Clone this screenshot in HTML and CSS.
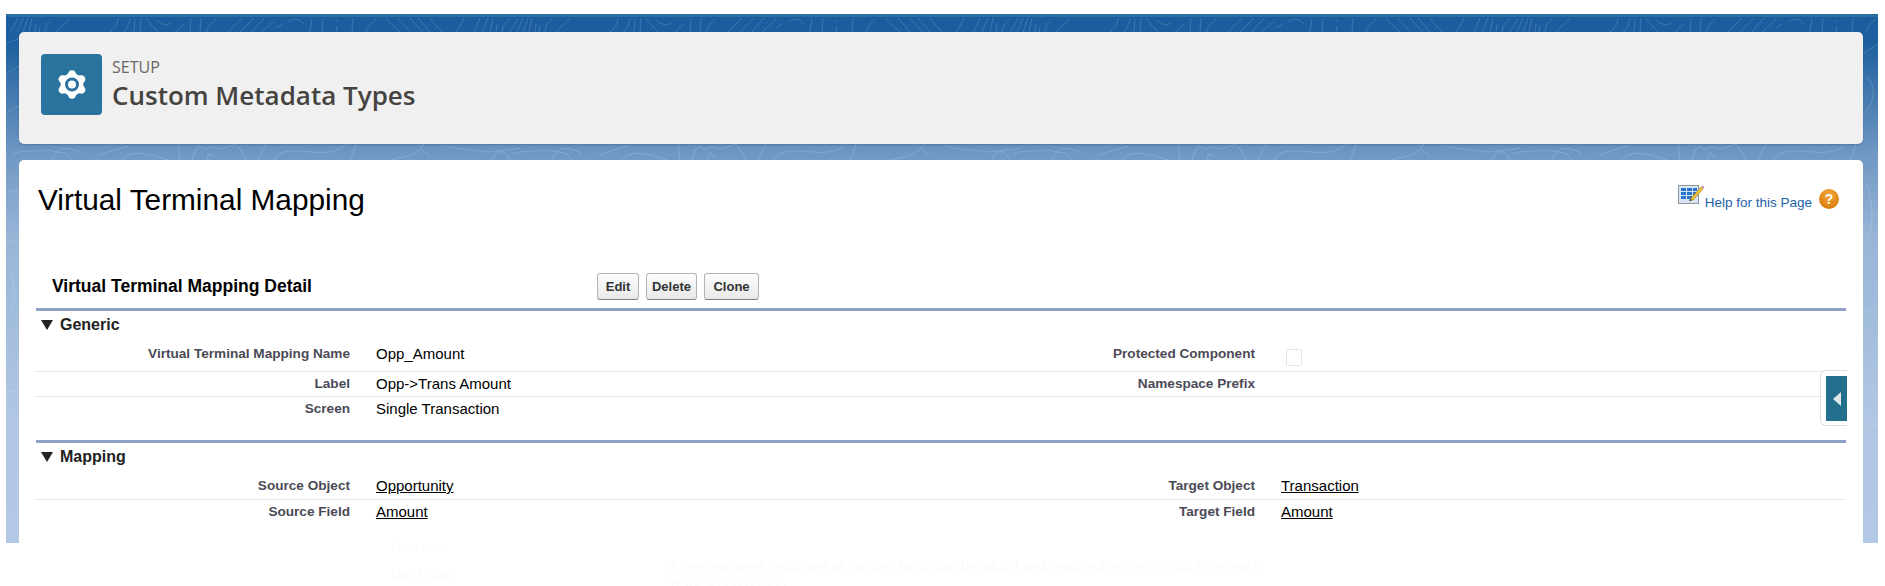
FILE: index.html
```html
<!DOCTYPE html>
<html lang="en">
<head>
<meta charset="utf-8">
<title>Virtual Terminal Mapping</title>
<link rel="stylesheet" href="styles.css">
</head>
<body>
<div class="stage">
  <svg class="contours" width="1872" height="529" viewBox="0 0 1872 529" fill="none">
    <defs>
      <g id="tile">
        <path d="M4 18C8 12 10 8 12 4M11 18L17 4M17 18L22 4M23 18L26 4M29 18L30 10M33 18L34 12M39 18C39 12 42 8 46 5M50 18C56 12 60 8 64 5M104 18C110 14 112 8 112 4M118 18C122 12 124 8 124 4M128 18L129 4M134 18L135 4M140 4C144 10 148 14 152 18M150 6C158 12 162 12 166 8M170 18C172 14 176 12 178 10M184 18L185 4M194 18L195 4M200 18C202 12 206 8 210 5M222 18L236 4M234 18L248 4M246 18L258 4M256 18L270 5M270 14L276 10M282 8C288 4 292 4 298 10M304 18L306 5M316 18L317 4M330 18L331 12M331 8L331 6M346 18L347 4M360 18C362 12 366 8 370 5M380 4C384 10 390 14 394 18M392 4L404 18M404 4L416 18M412 4L424 18M424 4C428 10 432 14 436 18M450 18C454 12 456 8 458 4M468 18L474 4M476 18L482 4M484 18L487 4M490 18L491 10M496 18C496 12 500 8 504 5"/>
        <path d="M6 140C14 136 30 138 42 136C56 140 60 136 66 146M46 146C50 134 60 130 76 140M92 142C100 138 110 136 122 132M116 146C124 136 136 138 162 146M172 130L174 146M186 146C190 134 192 130 196 134C200 138 204 130 210 134C216 136 222 132 230 130M202 146C200 140 206 136 208 144M230 130C236 138 238 142 240 146M252 146C254 140 256 136 260 130M268 146C272 136 288 136 306 138C322 140 336 136 340 130M350 130C348 136 346 142 344 146M384 146C400 142 412 142 418 130M416 136L424 142M440 132C452 136 470 136 484 138C496 136 506 136 514 134M486 146C490 136 498 134 504 146"/>
      </g>
    </defs>
    <use href="#tile" x="0"/>
    <use href="#tile" x="500"/>
    <use href="#tile" x="1000"/>
    <use href="#tile" x="1500"/>
    <path d="M0 30C5 28 10 26 13 24M0 60C5 56 9 55 13 52M0 100C5 96 9 94 13 92M0 180C6 176 10 176 13 178M0 230C6 226 10 226 13 230M4 260C10 270 10 290 4 300M0 380C6 376 10 376 13 380M1857 100C1870 90 1870 70 1860 62M1857 40L1872 30M1860 170C1868 190 1868 210 1860 230M1857 300L1872 290M1857 420C1866 410 1870 410 1872 412"/>
  </svg>

  <header class="page-head">
    <span class="head-icon">
      <svg width="32" height="32" viewBox="0 0 32 32">
        <path class="gear-body" d="M13 2.500C14.600 .8 17.400 .8 19 2.500C20 4.300 20 5.200 21.500 6C23 6.800 24 6.300 26 6.300C28.500 6.800 29.900 9.200 29.200 11.600C28.200 13.300 27.200 13.800 27.200 15.500C27.200 17.200 28.200 17.700 29.200 19.400C29.900 21.800 28.500 24.200 26 24.700C24 24.700 23 24.200 21.500 25C20 25.800 20 26.700 19 28.500C17.400 30.200 14.600 30.200 13 28.500C12 26.700 12 25.800 10.500 25C9 24.200 8 24.700 6 24.700C3.500 24.200 2.100 21.800 2.800 19.400C3.800 17.700 4.800 17.200 4.800 15.500C4.800 13.800 3.800 13.300 2.800 11.600C2.100 9.200 3.500 6.800 6 6.300C8 6.300 9 6.800 10.500 6C12 5.200 12 4.300 13 2.500Z"/>
        <circle class="gear-ring" cx="16" cy="15.500" r="5.500"/>
      </svg>
    </span>
    <div class="head-text">
      <span class="head-kicker">SETUP</span>
      <h1 class="head-title">Custom Metadata Types</h1>
    </div>
  </header>

  <main class="card">
    <div class="title-row">
      <h2 class="page-title">Virtual Terminal Mapping</h2>
      <div class="help">
        <svg class="help-table" width="27" height="21" viewBox="0 0 27 21">
          <rect x="0.500" y="1.500" width="20" height="18" fill="#d8e4f2" stroke="#8c979f"/>
          <path fill="#2a74cf" d="M3 4h5v3H3zM9 4h5v3H9zM15 4h4v3h-4zM3 8h5v3H3zM9 8h5v3H9zM3 12h5v3H3zM9 12h5v3H9zM15 8h4v3h-4z"/>
          <path fill="#f3c22f" stroke="#7a5c16" stroke-width=".5" d="M23 3l2 2-10 11-3 1 1-3z"/>
          <path fill="#c86fa0" d="M23.500 2.500l1-1 2 2-1 1z"/>
          <path fill="#23303a" d="M12 15l2 1-3 1z"/>
        </svg>
        <a class="help-link" href="#">Help for this Page</a>
        <span class="help-badge">?</span>
      </div>
    </div>

    <div class="detail-head">
      <h3 class="detail-title">Virtual Terminal Mapping Detail</h3>
      <div class="buttons">
        <button class="btn btn-edit" type="button">Edit</button>
        <button class="btn btn-delete" type="button">Delete</button>
        <button class="btn btn-clone" type="button">Clone</button>
      </div>
    </div>

    <section class="section">
      <h4 class="section-title"><span class="twist"></span>Generic</h4>
      <div class="row row-first">
        <span class="lbl">Virtual Terminal Mapping Name</span><span class="val">Opp_Amount</span>
        <span class="lbl">Protected Component</span><span class="val"><span class="check"></span></span>
      </div>
      <div class="row">
        <span class="lbl">Label</span><span class="val">Opp-&gt;Trans Amount</span>
        <span class="lbl">Namespace Prefix</span><span class="val"></span>
      </div>
      <div class="row row-last">
        <span class="lbl">Screen</span><span class="val">Single Transaction</span>
        <span class="lbl"></span><span class="val"></span>
      </div>
    </section>

    <section class="section section-map">
      <h4 class="section-title"><span class="twist"></span>Mapping</h4>
      <div class="row row-first-map">
        <span class="lbl">Source Object</span><span class="val"><a href="#">Opportunity</a></span>
        <span class="lbl">Target Object</span><span class="val"><a href="#">Transaction</a></span>
      </div>
      <div class="row row-last">
        <span class="lbl">Source Field</span><span class="val"><a href="#">Amount</a></span>
        <span class="lbl">Target Field</span><span class="val"><a href="#">Amount</a></span>
      </div>
    </section>

    <div class="side-tab"><span class="side-tab-inner"><span class="side-arrow"></span></span></div>
  </main>
</div>

<div class="ghost">
  <div class="ghost-nav">
    <span>Overview</span>
    <span>Quick Start</span>
  </div>
  <p class="ghost-copy">A few managed fields and all custom fields can be added and modified on the Virtual Terminal's Transaction screen.</p>
</div>
</body>
</html>
```

FILE: styles.css
```css
* { box-sizing: border-box; }

html, body {
  margin: 0;
  height: 586px;
  overflow: hidden;
  background: #fff;
  font-family: "Liberation Sans", Arial, sans-serif;
  color: #000;
}

.stage {
  position: relative;
  margin: 14px 7px 0 6px;
  height: 529px;
  padding: 18px 15px 0 13px;
  overflow: hidden;
  background: linear-gradient(180deg, #2a6f9f 0, #2a6f9f 3px, #1a5c9e 3px, #1e609f 30px, #6f98c3 140px, #97b4d7 220px, #b0c6e3 400px, #b3c8e4 100%);
}

.contours {
  position: absolute;
  left: 0;
  top: 0;
  stroke: rgba(255, 255, 255, .16);
  stroke-width: 1;
}

.page-head {
  position: relative;
  display: flex;
  align-items: flex-start;
  gap: 10px;
  height: 112px;
  padding: 22px 0 0 22px;
  background: #f0f0f0;
  border-radius: 5px;
  box-shadow: 0 1px 2px rgba(40, 60, 90, .3);
}

.head-icon {
  display: flex;
  align-items: center;
  justify-content: center;
  width: 61px;
  height: 61px;
  background: #2a739f;
  border-radius: 4px;
}

.gear-body { fill: #fff; }
.gear-ring { fill: #fff; stroke: #2a739f; stroke-width: 3; }

.head-text {
  display: flex;
  flex-direction: column;
  gap: 2px;
  padding-top: 3px;
}

.head-kicker {
  font-family: "Open Sans", sans-serif;
  font-size: 16px;
  line-height: 20px;
  color: #6a6661;
}

.head-title {
  margin: 0;
  font-family: "Open Sans", sans-serif;
  font-size: 26px;
  line-height: 32px;
  font-weight: 600;
  color: #45433f;
}

.card {
  position: relative;
  height: 385px;
  margin-top: 16px;
  padding: 0 17px;
  background: #fff;
  border-radius: 5px 5px 0 0;
}

.title-row {
  display: flex;
  justify-content: space-between;
  align-items: flex-start;
  height: 112px;
  padding: 22px 7px 0 2px;
}

.page-title {
  margin: 0;
  font-size: 29.800px;
  line-height: 36px;
  font-weight: 400;
}

.help {
  display: flex;
  align-items: flex-start;
  margin-top: 2px;
}

.help-table { display: block; }

.help-link {
  margin-top: 11px;
  font-size: 13.500px;
  line-height: 16px;
  color: #1a62a8;
  text-decoration: none;
}

.help-badge {
  display: flex;
  align-items: center;
  justify-content: center;
  width: 20px;
  height: 20px;
  margin: 5px 0 0 7px;
  border-radius: 50%;
  background: radial-gradient(circle at 50% 30%, #f2a93a, #d97d0e 80%);
  color: #fff;
  font-size: 14px;
  font-weight: 700;
}

.detail-head {
  display: flex;
  align-items: center;
  height: 36px;
  padding-bottom: 7px;
}

.detail-title {
  width: 561px;
  margin: 0;
  padding-left: 16px;
  font-size: 17.500px;
  font-weight: 700;
}

.buttons {
  display: flex;
  gap: 7px;
}

.btn {
  height: 27px;
  padding: 0;
  border: 1px solid #b5b5b5;
  border-bottom-color: #7f7f7f;
  border-radius: 3px;
  background: linear-gradient(180deg, #fdfdfd, #e8e8e8);
  font-family: "Liberation Sans", Arial, sans-serif;
  font-size: 13px;
  font-weight: 700;
  color: #333;
}

.btn-edit { width: 42px; }
.btn-delete { width: 51px; }
.btn-clone { width: 55px; }

.section {
  border-top: 3px solid #8ea0c6;
}

.section-map { margin-top: 19px; }

.section-title {
  display: flex;
  align-items: center;
  gap: 7px;
  height: 29px;
  margin: 0;
  padding: 0 0 1px 5px;
  font-size: 16px;
  font-weight: 700;
  color: #222;
}

.twist {
  width: 0;
  height: 0;
  border-left: 6px solid transparent;
  border-right: 6px solid transparent;
  border-top: 10px solid #222;
}

.row {
  display: grid;
  grid-template-columns: 314px 615px 290px 1fr;
  height: 25px;
  padding-bottom: 2px;
  border-bottom: 1px solid #e8e8e8;
  align-items: center;
}

.row-first { height: 32px; padding-bottom: 4px; }
.row-first-map { height: 28px; padding-bottom: 0; }
.row-last { height: 24px; border-bottom: 0; }

.lbl {
  text-align: right;
  font-size: 13.600px;
  font-weight: 700;
  color: #4a4a56;
}

.val {
  padding-left: 26px;
  font-size: 15px;
  color: #000;
}

.val a { color: #000; text-decoration: underline; }

.check {
  display: block;
  width: 16px;
  height: 17px;
  margin: 8px 0 0 5px;
  border: 1px dotted #ccc;
  border-radius: 2px;
}

.side-tab {
  position: absolute;
  right: 16px;
  top: 210px;
  width: 27px;
  height: 56px;
  padding: 5px 0 4px 5px;
  background: #fff;
  border: 1px solid #ddd;
  border-right: 0;
  border-radius: 6px 0 0 6px;
}

.side-tab-inner {
  display: flex;
  align-items: center;
  justify-content: center;
  width: 21px;
  height: 100%;
  background: #236f8e;
}

.side-arrow {
  width: 0;
  height: 0;
  border-top: 7px solid transparent;
  border-bottom: 7px solid transparent;
  border-right: 8px solid #dfe7ea;
}

.ghost {
  display: flex;
  height: 43px;
  padding-left: 391px;
  font-family: "Open Sans", sans-serif;
  color: #fafafa;
}

.ghost-nav {
  display: flex;
  flex-direction: column;
  gap: 12px;
  width: 278px;
  margin-top: -3px;
  font-size: 13px;
  line-height: 14px;
}

.ghost-copy {
  width: 600px;
  margin: 12px 0 0;
  font-size: 13.300px;
  line-height: 20px;
}
```
